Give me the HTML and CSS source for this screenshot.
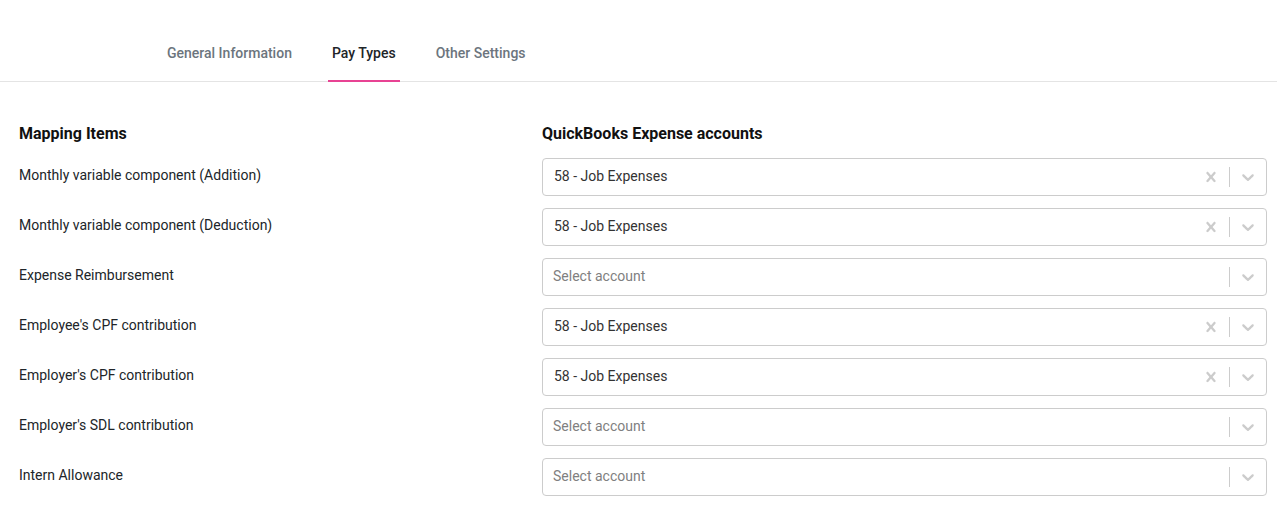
FILE: index.html
```html
<!DOCTYPE html>
<html lang="en">
<head>
    <meta charset="UTF-8">
    <title>QuickBooks Mapping - Pay Types</title>
    <link rel="stylesheet" href="styles.css">
</head>
<body>
    <div class="tabs">
        <a class="tab">General Information</a>
        <a class="tab active">Pay Types</a>
        <a class="tab">Other Settings</a>
    </div>

    <div class="mapping">
        <div class="mapping-head">
            <div>Mapping Items</div>
            <div>QuickBooks Expense accounts</div>
        </div>

        <div class="mapping-row">
            <div class="mapping-label">Monthly variable component (Addition)</div>
            <div class="select">
                <div class="select-value">58 - Job Expenses</div>
                <div class="select-indicator"><svg width="20" height="20" viewBox="0 0 20 20"><path d="M14.348 14.849c-0.469 0.469-1.229 0.469-1.697 0l-2.651-3.030-2.651 3.029c-0.469 0.469-1.229 0.469-1.697 0-0.469-0.469-0.469-1.229 0-1.697l2.758-3.15-2.759-3.152c-0.469-0.469-0.469-1.228 0-1.697s1.228-0.469 1.697 0l2.652 3.031 2.651-3.031c0.469-0.469 1.228-0.469 1.697 0s0.469 1.229 0 1.697l-2.758 3.152 2.758 3.15c0.469 0.469 0.469 1.229 0 1.698z"/></svg></div>
                <span class="select-sep"></span>
                <div class="select-indicator"><svg width="20" height="20" viewBox="0 0 20 20"><path d="M4.516 7.548c0.436-0.446 1.043-0.481 1.576 0l3.908 3.747 3.908-3.747c0.533-0.481 1.141-0.446 1.574 0 0.436 0.445 0.408 1.197 0 1.615-0.406 0.418-4.695 4.502-4.695 4.502-0.217 0.223-0.502 0.335-0.787 0.335s-0.57-0.112-0.789-0.335c0 0-4.287-4.084-4.695-4.502s-0.436-1.17 0-1.615z"/></svg></div>
            </div>
        </div>

        <div class="mapping-row">
            <div class="mapping-label">Monthly variable component (Deduction)</div>
            <div class="select">
                <div class="select-value">58 - Job Expenses</div>
                <div class="select-indicator"><svg width="20" height="20" viewBox="0 0 20 20"><path d="M14.348 14.849c-0.469 0.469-1.229 0.469-1.697 0l-2.651-3.030-2.651 3.029c-0.469 0.469-1.229 0.469-1.697 0-0.469-0.469-0.469-1.229 0-1.697l2.758-3.15-2.759-3.152c-0.469-0.469-0.469-1.228 0-1.697s1.228-0.469 1.697 0l2.652 3.031 2.651-3.031c0.469-0.469 1.228-0.469 1.697 0s0.469 1.229 0 1.697l-2.758 3.152 2.758 3.15c0.469 0.469 0.469 1.229 0 1.698z"/></svg></div>
                <span class="select-sep"></span>
                <div class="select-indicator"><svg width="20" height="20" viewBox="0 0 20 20"><path d="M4.516 7.548c0.436-0.446 1.043-0.481 1.576 0l3.908 3.747 3.908-3.747c0.533-0.481 1.141-0.446 1.574 0 0.436 0.445 0.408 1.197 0 1.615-0.406 0.418-4.695 4.502-4.695 4.502-0.217 0.223-0.502 0.335-0.787 0.335s-0.57-0.112-0.789-0.335c0 0-4.287-4.084-4.695-4.502s-0.436-1.17 0-1.615z"/></svg></div>
            </div>
        </div>

        <div class="mapping-row">
            <div class="mapping-label">Expense Reimbursement</div>
            <div class="select">
                <div class="select-value placeholder">Select account</div>
                <span class="select-sep"></span>
                <div class="select-indicator"><svg width="20" height="20" viewBox="0 0 20 20"><path d="M4.516 7.548c0.436-0.446 1.043-0.481 1.576 0l3.908 3.747 3.908-3.747c0.533-0.481 1.141-0.446 1.574 0 0.436 0.445 0.408 1.197 0 1.615-0.406 0.418-4.695 4.502-4.695 4.502-0.217 0.223-0.502 0.335-0.787 0.335s-0.57-0.112-0.789-0.335c0 0-4.287-4.084-4.695-4.502s-0.436-1.17 0-1.615z"/></svg></div>
            </div>
        </div>

        <div class="mapping-row">
            <div class="mapping-label">Employee's CPF contribution</div>
            <div class="select">
                <div class="select-value">58 - Job Expenses</div>
                <div class="select-indicator"><svg width="20" height="20" viewBox="0 0 20 20"><path d="M14.348 14.849c-0.469 0.469-1.229 0.469-1.697 0l-2.651-3.030-2.651 3.029c-0.469 0.469-1.229 0.469-1.697 0-0.469-0.469-0.469-1.229 0-1.697l2.758-3.15-2.759-3.152c-0.469-0.469-0.469-1.228 0-1.697s1.228-0.469 1.697 0l2.652 3.031 2.651-3.031c0.469-0.469 1.228-0.469 1.697 0s0.469 1.229 0 1.697l-2.758 3.152 2.758 3.15c0.469 0.469 0.469 1.229 0 1.698z"/></svg></div>
                <span class="select-sep"></span>
                <div class="select-indicator"><svg width="20" height="20" viewBox="0 0 20 20"><path d="M4.516 7.548c0.436-0.446 1.043-0.481 1.576 0l3.908 3.747 3.908-3.747c0.533-0.481 1.141-0.446 1.574 0 0.436 0.445 0.408 1.197 0 1.615-0.406 0.418-4.695 4.502-4.695 4.502-0.217 0.223-0.502 0.335-0.787 0.335s-0.57-0.112-0.789-0.335c0 0-4.287-4.084-4.695-4.502s-0.436-1.17 0-1.615z"/></svg></div>
            </div>
        </div>

        <div class="mapping-row">
            <div class="mapping-label">Employer's CPF contribution</div>
            <div class="select">
                <div class="select-value">58 - Job Expenses</div>
                <div class="select-indicator"><svg width="20" height="20" viewBox="0 0 20 20"><path d="M14.348 14.849c-0.469 0.469-1.229 0.469-1.697 0l-2.651-3.030-2.651 3.029c-0.469 0.469-1.229 0.469-1.697 0-0.469-0.469-0.469-1.229 0-1.697l2.758-3.15-2.759-3.152c-0.469-0.469-0.469-1.228 0-1.697s1.228-0.469 1.697 0l2.652 3.031 2.651-3.031c0.469-0.469 1.228-0.469 1.697 0s0.469 1.229 0 1.697l-2.758 3.152 2.758 3.15c0.469 0.469 0.469 1.229 0 1.698z"/></svg></div>
                <span class="select-sep"></span>
                <div class="select-indicator"><svg width="20" height="20" viewBox="0 0 20 20"><path d="M4.516 7.548c0.436-0.446 1.043-0.481 1.576 0l3.908 3.747 3.908-3.747c0.533-0.481 1.141-0.446 1.574 0 0.436 0.445 0.408 1.197 0 1.615-0.406 0.418-4.695 4.502-4.695 4.502-0.217 0.223-0.502 0.335-0.787 0.335s-0.57-0.112-0.789-0.335c0 0-4.287-4.084-4.695-4.502s-0.436-1.17 0-1.615z"/></svg></div>
            </div>
        </div>

        <div class="mapping-row">
            <div class="mapping-label">Employer's SDL contribution</div>
            <div class="select">
                <div class="select-value placeholder">Select account</div>
                <span class="select-sep"></span>
                <div class="select-indicator"><svg width="20" height="20" viewBox="0 0 20 20"><path d="M4.516 7.548c0.436-0.446 1.043-0.481 1.576 0l3.908 3.747 3.908-3.747c0.533-0.481 1.141-0.446 1.574 0 0.436 0.445 0.408 1.197 0 1.615-0.406 0.418-4.695 4.502-4.695 4.502-0.217 0.223-0.502 0.335-0.787 0.335s-0.57-0.112-0.789-0.335c0 0-4.287-4.084-4.695-4.502s-0.436-1.17 0-1.615z"/></svg></div>
            </div>
        </div>

        <div class="mapping-row">
            <div class="mapping-label">Intern Allowance</div>
            <div class="select">
                <div class="select-value placeholder">Select account</div>
                <span class="select-sep"></span>
                <div class="select-indicator"><svg width="20" height="20" viewBox="0 0 20 20"><path d="M4.516 7.548c0.436-0.446 1.043-0.481 1.576 0l3.908 3.747 3.908-3.747c0.533-0.481 1.141-0.446 1.574 0 0.436 0.445 0.408 1.197 0 1.615-0.406 0.418-4.695 4.502-4.695 4.502-0.217 0.223-0.502 0.335-0.787 0.335s-0.57-0.112-0.789-0.335c0 0-4.287-4.084-4.695-4.502s-0.436-1.17 0-1.615z"/></svg></div>
            </div>
        </div>
    </div>
</body>
</html>
```

FILE: styles.css
```css
* {
    margin: 0;
    padding: 0;
    box-sizing: border-box;
}

body {
    font-family: Roboto, 'Noto Sans', sans-serif;
    background: #fff;
    color: #212529;
    font-size: 14px;
    line-height: 20px;
}

.tabs {
    display: flex;
    gap: 32px;
    padding: 43px 0 0 163px;
    border-bottom: 1px solid #e4e4e4;
}

.tab {
    padding: 0 4px 17px;
    font-size: 14px;
    font-weight: 500;
    color: #6c757d;
    margin-bottom: -1px;
    border-bottom: 2px solid transparent;
    cursor: pointer;
}

.tab.active {
    color: #212529;
    border-bottom-color: #e84393;
}

.mapping {
    padding: 42px 10px 0 19px;
}

.mapping-head,
.mapping-row {
    display: grid;
    grid-template-columns: 523px 1fr;
}

.mapping-head {
    font-size: 16px;
    font-weight: 700;
    line-height: 20px;
    color: #111;
    margin-bottom: 14px;
}

.mapping-row {
    margin-bottom: 12px;
}

.mapping-label {
    padding-top: 7px;
    color: #212529;
}

.select {
    display: flex;
    align-items: center;
    height: 38px;
    border: 1px solid #ccc;
    border-radius: 4px;
    background: #fff;
}

.select-value {
    flex: 1;
    padding: 0 10px 2px 11px;
    color: #333;
}

.select-value.placeholder {
    color: #808080;
    padding-left: 10px;
}

.select-indicator {
    display: flex;
    padding: 8px;
    color: #ccc;
}

.select-indicator svg {
    fill: currentColor;
}

.select-sep {
    align-self: stretch;
    width: 1px;
    margin: 8px 0;
    background: #ccc;
}
```
